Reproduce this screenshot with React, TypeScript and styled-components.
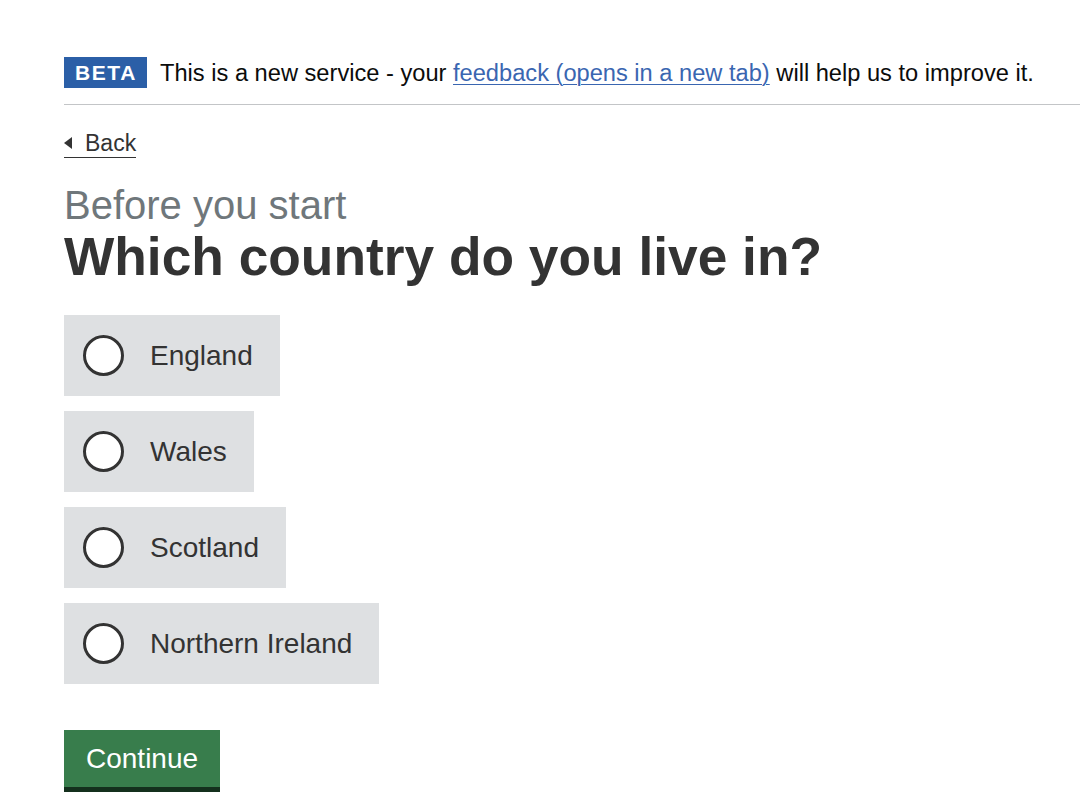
import React from 'react';
import styled, { createGlobalStyle } from 'styled-components';

const GlobalStyle = createGlobalStyle`
  html, body {
    margin: 0;
    padding: 0;
    background: #ffffff;
  }
  body {
    font-family: "Liberation Sans", Arial, Helvetica, sans-serif;
    color: #0b0c0c;
  }
  * {
    box-sizing: border-box;
  }
`;

const Page = styled.div`
  padding-left: 64px;
  padding-top: 57px;
  padding-bottom: 20px;
`;

// --- Phase banner ---
const PhaseBanner = styled.div`
  display: flex;
  align-items: center;
  gap: 13px;
  padding-bottom: 16px;
  border-bottom: 1px solid #c3c5c7;
`;

const PhaseTag = styled.strong`
  display: inline-block;
  height: 31px;
  line-height: 31px;
  padding: 0 10px 0 11px;
  background: #2b5fa7;
  color: #ffffff;
  font-size: 21px;
  font-weight: 700;
  letter-spacing: 1.6px;
`;

const BannerText = styled.span`
  padding-top: 3px;
  font-size: 23.65px;
  line-height: 1;
  color: #0b0c0c;
`;

const Link = styled.a`
  color: #3a66b1;
  text-decoration: underline;
  text-decoration-thickness: 1px;
  text-underline-offset: 3px;
`;

// --- Back link ---
const BackLink = styled.a`
  position: relative;
  display: inline-block;
  margin-top: 27px;
  padding-left: 21px;
  padding-bottom: 2px;
  font-size: 23px;
  line-height: 1;
  color: #333333;
  text-decoration: none;
  border-bottom: 1px solid #333333;

  &::before {
    content: '';
    position: absolute;
    left: 0;
    top: 5px;
    border-style: solid;
    border-width: 6px 8px 6px 0;
    border-color: transparent #333333 transparent transparent;
  }
`;

// --- Heading ---
const Caption = styled.span`
  display: block;
  margin-top: 27px;
  font-size: 40px;
  line-height: 1;
  color: #6f777b;
`;

const Heading = styled.h1`
  margin: 5px 0 0;
  font-size: 53.3px;
  line-height: 1;
  font-weight: 700;
  color: #333333;
`;

// --- Radios ---
const RadioList = styled.div`
  display: flex;
  flex-direction: column;
  align-items: flex-start;
  gap: 15px;
  margin-top: 32px;
`;

const RadioItem = styled.label`
  display: flex;
  align-items: center;
  gap: 26px;
  height: 81px;
  padding: 0 27px 0 19px;
  background: #dee0e2;
  cursor: pointer;
`;

const RadioCircle = styled.input`
  appearance: none;
  margin: 0;
  width: 41px;
  height: 41px;
  border: 3px solid #333333;
  border-radius: 50%;
  background: #ffffff;
`;

const RadioLabel = styled.span`
  font-size: 28px;
  line-height: 1;
  color: #333333;
`;

// --- Button ---
const Button = styled.button`
  display: block;
  margin-top: 46px;
  height: 62px;
  padding: 0 22px;
  border: 0;
  border-bottom: 5px solid #14301d;
  border-radius: 0;
  background: #387d4c;
  color: #ffffff;
  font-family: inherit;
  font-size: 28px;
  line-height: 1;
  cursor: pointer;
`;

const countries = ['England', 'Wales', 'Scotland', 'Northern Ireland'];

const App = () => {
  return (
    <>
      <GlobalStyle />
      <Page>
        <PhaseBanner>
          <PhaseTag>BETA</PhaseTag>
          <BannerText>
            This is a new service - your{' '}
            <Link href="#">feedback (opens in a new tab)</Link> will help us to
            improve it.
          </BannerText>
        </PhaseBanner>

        <BackLink href="#">Back</BackLink>

        <Caption>Before you start</Caption>
        <Heading>Which country do you live in?</Heading>

        <RadioList>
          {countries.map(c => (
            <RadioItem key={c}>
              <RadioCircle type="radio" name="country" value={c} />
              <RadioLabel>{c}</RadioLabel>
            </RadioItem>
          ))}
        </RadioList>

        <Button type="button">Continue</Button>
      </Page>
    </>
  );
};

export default React.memo(App);
